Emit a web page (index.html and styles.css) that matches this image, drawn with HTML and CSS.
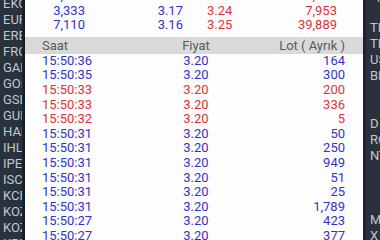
FILE: index.html
```html
<html>
    <head>
        <title>Derinlik</title>
        <link rel="stylesheet" href="styles.css">
    </head>
    <body>
        <div id="screen">
            <div class="sideLeft">
                <div class="code">EKGYO</div>
                <div class="code">EUPWR</div>
                <div class="code">EREGL</div>
                <div class="code">FROTO</div>
                <div class="code">GARAN</div>
                <div class="code">GOLTS</div>
                <div class="code">GSDHO</div>
                <div class="code">GUBRF</div>
                <div class="code">HALKB</div>
                <div class="code">IHLAS</div>
                <div class="code">IPEKE</div>
                <div class="code">ISCTR</div>
                <div class="code">KCHOL</div>
                <div class="code">KOZAL</div>
                <div class="code">KOZAA</div>
                <div class="code">KRDMD</div>
            </div>
            <div class="shadow"></div>

            <div class="dialog">
                <div class="depth">
                    <div class="depthRow">
                        <span class="bidLot blue">5,584</span>
                        <span class="bidPrice blue">3.18</span>
                        <span class="askPrice red">3.23</span>
                        <span class="askLot red">10,790</span>
                    </div>
                    <div class="depthRow">
                        <span class="bidLot blue">3,333</span>
                        <span class="bidPrice blue">3.17</span>
                        <span class="askPrice red">3.24</span>
                        <span class="askLot red">7,953</span>
                    </div>
                    <div class="depthRow">
                        <span class="bidLot blue">7,110</span>
                        <span class="bidPrice blue">3.16</span>
                        <span class="askPrice red">3.25</span>
                        <span class="askLot red">39,889</span>
                    </div>
                </div>

                <div class="tradeHeader">
                    <span class="time">Saat</span>
                    <span class="price">Fiyat</span>
                    <span class="lot">Lot ( Ayrık )</span>
                </div>

                <div class="trades">
                    <div class="tradeRow blue"><span class="time">15:50:36</span><span class="price">3.20</span><span class="lot">164</span></div>
                    <div class="tradeRow blue"><span class="time">15:50:35</span><span class="price">3.20</span><span class="lot">300</span></div>
                    <div class="tradeRow red"><span class="time">15:50:33</span><span class="price">3.20</span><span class="lot">200</span></div>
                    <div class="tradeRow red"><span class="time">15:50:33</span><span class="price">3.20</span><span class="lot">336</span></div>
                    <div class="tradeRow red"><span class="time">15:50:32</span><span class="price">3.20</span><span class="lot">5</span></div>
                    <div class="tradeRow blue"><span class="time">15:50:31</span><span class="price">3.20</span><span class="lot">50</span></div>
                    <div class="tradeRow blue"><span class="time">15:50:31</span><span class="price">3.20</span><span class="lot">250</span></div>
                    <div class="tradeRow blue"><span class="time">15:50:31</span><span class="price">3.20</span><span class="lot">949</span></div>
                    <div class="tradeRow blue"><span class="time">15:50:31</span><span class="price">3.20</span><span class="lot">51</span></div>
                    <div class="tradeRow blue"><span class="time">15:50:31</span><span class="price">3.20</span><span class="lot">25</span></div>
                    <div class="tradeRow blue"><span class="time">15:50:31</span><span class="price">3.20</span><span class="lot">1,789</span></div>
                    <div class="tradeRow blue"><span class="time">15:50:27</span><span class="price">3.20</span><span class="lot">423</span></div>
                    <div class="tradeRow blue"><span class="time">15:50:27</span><span class="price">3.20</span><span class="lot">377</span></div>
                </div>
            </div>

            <div class="sideRight">
                <div class="code">3,4</div>
                <div class="code"></div>
                <div class="code">TRY</div>
                <div class="code">TRY</div>
                <div class="code">USD</div>
                <div class="code">BNP</div>
                <div class="code"></div>
                <div class="code"></div>
                <div class="code">D</div>
                <div class="code">ROS</div>
                <div class="code">NTS</div>
                <div class="code"></div>
                <div class="code"></div>
                <div class="code"></div>
                <div class="code">MI</div>
                <div class="code">X</div>
            </div>
        </div>
    </body>
</html>
```

FILE: styles.css
```css
body{
    margin: 0;
    background: #232b35;
    font-family: Roboto, "Noto Sans", sans-serif;
}
#screen{
    width: 380px;
    height: 240px;
    display: flex;
    overflow: hidden;
}

/* dimmed list behind the dialog */
.sideLeft, .sideRight{
    background: #28313c;
    color: #c3c8ce;
    font-size: 13px;
    overflow: hidden;
    white-space: nowrap;
}
.sideLeft{
    width: 22px;
    padding-left: 3px;
    box-sizing: border-box;
    margin-top: -4px;
}
.sideRight{
    flex: 1;
    padding-left: 4px;
    margin-top: -12px;
    border-left: 3px solid #1d242d;
}
.code{
    height: 16px;
    line-height: 16px;
}
.shadow{
    width: 3px;
    background: linear-gradient(to right, #1f262f, #141920);
}

/* dialog */
.dialog{
    width: 338px;
    background: #fdfdfd;
    font-size: 13px;
    flex-shrink: 0;
}
.blue{
    color: #3434c6;
}
.red{
    color: #d7353b;
}

.depth{
    margin-top: -11px;
    padding-bottom: 4px;
}
.depthRow{
    display: flex;
    height: 14.6px;
    line-height: 14.6px;
}
.bidLot{
    width: 60px;
    text-align: right;
}
.bidPrice{
    width: 98px;
    text-align: right;
}
.askPrice{
    width: 82px;
    padding-left: 24px;
    box-sizing: border-box;
}
.askLot{
    width: 72px;
    text-align: right;
}

.tradeHeader{
    display: flex;
    height: 17px;
    line-height: 17px;
    background: #d9d9d9;
    color: #5a5a5a;
}
.tradeRow{
    display: flex;
    height: 14.6px;
    line-height: 14.6px;
}
.time{
    width: 120px;
    padding-left: 17px;
    box-sizing: border-box;
}
.price{
    width: 102px;
    text-align: center;
}
.lot{
    width: 98px;
    text-align: right;
}
```
